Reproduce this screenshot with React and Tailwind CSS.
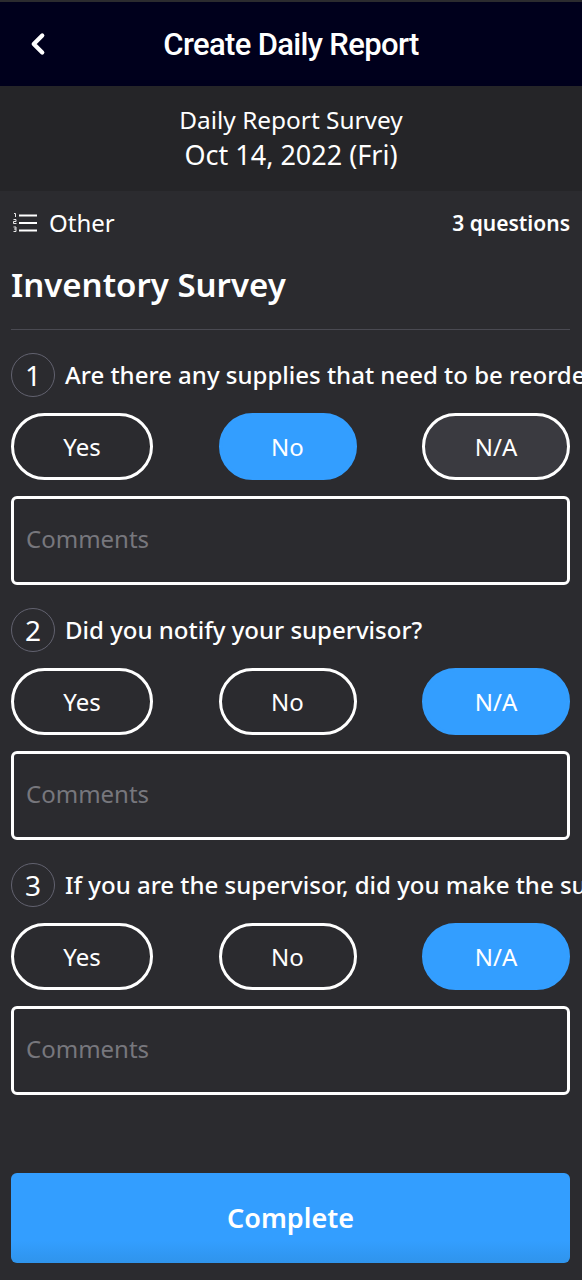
import { ChevronLeft } from 'lucide-react';

const questions = [
  { id: 1, text: 'Are there any supplies that need to be reordered?', selected: 'No', pressed: 'N/A' },
  { id: 2, text: 'Did you notify your supervisor?', selected: 'N/A' },
  { id: 3, text: 'If you are the supervisor, did you make the supply order?', selected: 'N/A' },
];

const options = [
  { label: 'Yes', width: 'w-[142px]' },
  { label: 'No', width: 'w-[138px]' },
  { label: 'N/A', width: 'w-[148px]' },
];

function ListIcon() {
  return (
    <svg width="24" height="22" viewBox="0 0 24 22" fill="none" className="shrink-0">
      <path d="M6 3.500h18M6 11h18M6 18.500h18" stroke="#fff" strokeWidth="2" />
      <path d="M1 1.500h1.500v3.500M0.500 7.500h2.500v2H0.500v2h3M0.500 15h2.500v2H1M3 17v2.500H0.500" stroke="#fff" strokeWidth="0.9" />
    </svg>
  );
}

function Question({ q }) {
  return (
    <div className="mb-[23px]">
      <div className="flex items-center h-11 whitespace-nowrap">
        <div className="w-11 h-11 shrink-0 rounded-full border border-[#62626f] flex items-center justify-center text-[28px]">
          {q.id}
        </div>
        <span className="ml-[10px] text-[24px] font-medium">{q.text}</span>
      </div>
      <div className="flex justify-between mt-4">
        {options.map((o) => {
          const isSelected = q.selected === o.label;
          const isPressed = q.pressed === o.label;
          return (
            <button
              key={o.label}
              className={`${o.width} h-[67px] rounded-[34px] text-[24px] text-white border-[3px] ${
                isSelected
                  ? 'bg-[#339eff] border-[#339eff]'
                  : isPressed
                    ? 'bg-[#3a3a40] border-white'
                    : 'bg-transparent border-white'
              }`}
            >
              {o.label}
            </button>
          );
        })}
      </div>
      <div className="mt-4 h-[89px] pb-1 rounded-md border-[3px] border-white flex items-center px-3 text-[24px] text-[#77777d]">
        Comments
      </div>
    </div>
  );
}

export default function App() {
  return (
    <div className="w-[582px] h-[1280px] overflow-hidden flex flex-col bg-[#2b2b2f] text-white font-['Noto_Sans','Open_Sans',sans-serif]">
      <div className="h-[2px] bg-[#2b2b2f]" />
      <header className="h-[84px] pt-[3px] bg-[#00001c] relative flex items-center justify-center">
        <ChevronLeft className="absolute left-[21px] top-[25px]" size={34} strokeWidth={3} />
        <h1 className="font-['Roboto',sans-serif] font-medium text-[31px] tracking-[-0.65px]">Create Daily Report</h1>
      </header>
      <div className="h-[105px] pb-1 bg-[#252528] flex flex-col items-center justify-center">
        <div className="text-[24.4px] leading-[35px]">Daily Report Survey</div>
        <div className="text-[27px] leading-[35px]">Oct 14, 2022 (Fri)</div>
      </div>
      <main className="flex-1 pl-[11px] pr-3 flex flex-col">
        <div className="flex items-center justify-between h-[34px] mt-[15px]">
          <div className="flex items-center gap-3 ml-[2px] text-[24px]">
            <ListIcon />
            Other
          </div>
          <span className="text-[21px] font-semibold pt-px">3 questions</span>
        </div>
        <h2 className="text-[33px] font-semibold leading-[44px] mt-[23px]">Inventory Survey</h2>
        <div className="h-px bg-[#4a4a52] mt-[22px] mb-[23px]" />
        {questions.map((q) => (
          <Question key={q.id} q={q} />
        ))}
        <button className="mt-[55px] h-[90px] rounded-md bg-linear-to-b from-[#339eff] from-75% to-[#2f94ec] text-[27px] font-semibold">
          Complete
        </button>
      </main>
    </div>
  );
}
